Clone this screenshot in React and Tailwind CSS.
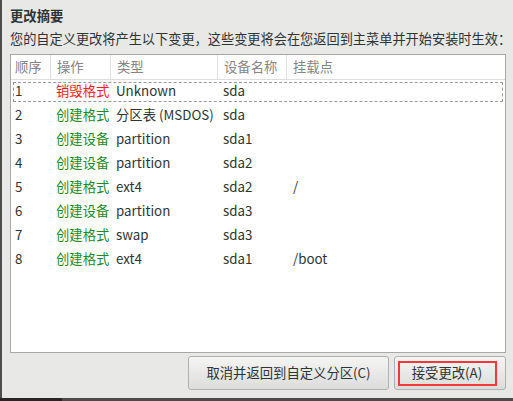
import React from "react";

const rows = [
  ["1", "销毁格式", "Unknown", "sda", "", true],
  ["2", "创建格式", "分区表 (MSDOS)", "sda", ""],
  ["3", "创建设备", "partition", "sda1", ""],
  ["4", "创建设备", "partition", "sda2", ""],
  ["5", "创建格式", "ext4", "sda2", "/"],
  ["6", "创建设备", "partition", "sda3", ""],
  ["7", "创建格式", "swap", "sda3", ""],
  ["8", "创建格式", "ext4", "sda1", "/boot"],
];

export default function App() {
  return (
    <div
      className="w-[513px] h-[401px] flex flex-col bg-[#e8e8e7] overflow-hidden text-[13.33px] text-[#2e3436]"
      style={{ fontFamily: '"Noto Sans CJK SC", "Noto Sans", sans-serif' }}
    >
      <div className="flex flex-1 min-h-0">
        <div className="w-[2px] shrink-0 bg-[#4d4d4d]" />
        <div className="flex-1 min-w-0 flex flex-col pt-[7px] pl-[8px] pr-[7px]">
          <div className="h-[17px] leading-[17px] font-bold text-[#2e3436]">更改摘要</div>
          <div className="mt-[6px] h-[17px] leading-[17px] whitespace-nowrap text-[13.2px]">
            您的自定义更改将产生以下变更，这些变更将会在您返回到主菜单并开始安装时生效：
          </div>
          <div className="mt-[7px] h-[299px] border border-[#a8a8a8] bg-white flex flex-col">
            <div className="flex h-[25px] border-b border-[#dedede] text-[#858585] leading-[24px]">
              <div className="w-[40px] pl-[4px] border-r border-[#dedede]">顺序</div>
              <div className="w-[60px] pl-[6px] border-r border-[#dedede]">操作</div>
              <div className="w-[107px] pl-[6px] border-r border-[#dedede]">类型</div>
              <div className="w-[69px] pl-[6px] border-r border-[#dedede]">设备名称</div>
              <div className="flex-1 pl-[6px]">挂载点</div>
            </div>
            <div className="flex flex-col">
              {rows.map((r) => (
                <div key={r[0]} className="relative flex h-[24px] leading-[22px]">
                  {r[5] && (
                    <div className="absolute left-[2px] right-[2px] top-[2px] bottom-[2px] border border-dashed border-[#9a9a9a]" />
                  )}
                  <div className="w-[40px] pl-[4px]">{r[0]}</div>
                  <div
                    className={
                      "w-[60px] pl-[5px] " + (r[5] ? "text-[#ff1a1a]" : "text-[#1e8a1e]")
                    }
                  >
                    {r[1]}
                  </div>
                  <div className="w-[107px] pl-[5px] whitespace-nowrap">{r[2]}</div>
                  <div className="w-[69px] pl-[5px]">{r[3]}</div>
                  <div className="flex-1 pl-[6px]">{r[4]}</div>
                </div>
              ))}
            </div>
          </div>
          <div className="mt-[3px] flex justify-end gap-[5px]">
            <button className="w-[201px] h-[34px] rounded-[3px] border border-[#b0b0b0] bg-gradient-to-b from-[#f5f5f4] to-[#dcdcdb] text-[#2e3436] leading-[32px]">
              取消并返回到自定义分区(C)
            </button>
            <button className="relative w-[112px] h-[34px] rounded-[3px] border border-[#b0b0b0] bg-gradient-to-b from-[#f5f5f4] to-[#dcdcdb] text-[#2e3436] leading-[32px]">
              <span className="absolute left-[3px] top-[4px] w-[99px] h-[25px] border-2 border-[#f03a3a]" />
              <span className="relative pr-[6px]">接受更改(A)</span>
            </button>
          </div>
        </div>
      </div>
      <div className="h-[3px] flex">
        <div className="w-[62px] bg-[#262626]" />
        <div className="flex-1 bg-[#4a4a4a]" />
      </div>
    </div>
  );
}
